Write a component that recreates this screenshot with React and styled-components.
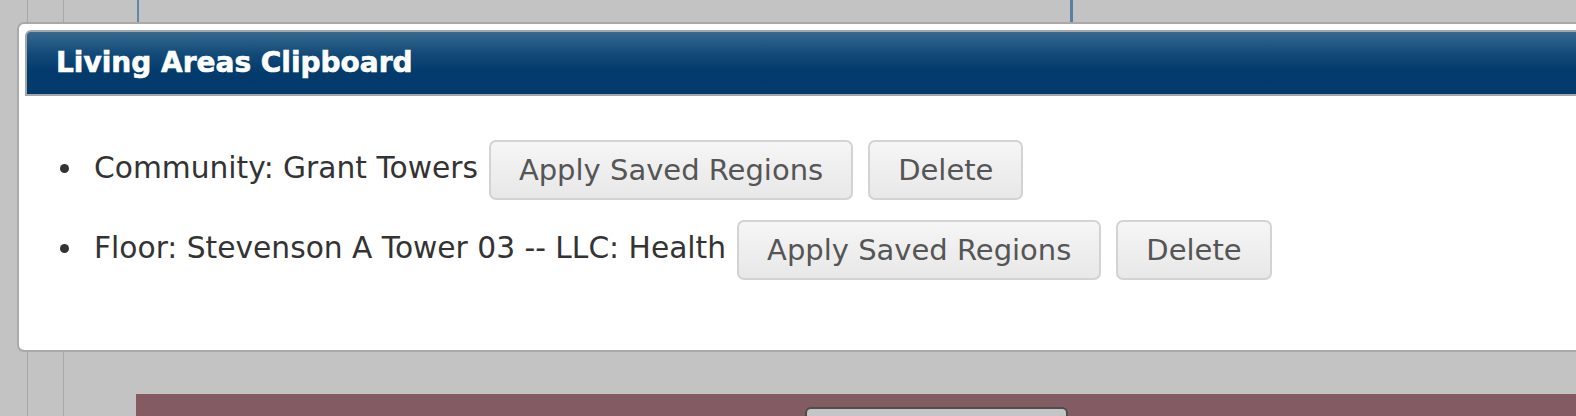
import React from 'react'
import styled, { createGlobalStyle } from 'styled-components'

const GlobalStyle = createGlobalStyle`
  html, body {
    margin: 0;
    padding: 0;
    background: #c3c3c3;
  }
  #root {
    height: 416px;
    overflow: hidden;
    position: relative;
  }
`

const clips = [
  { id: 1, label: 'Community: Grant Towers' },
  { id: 2, label: 'Floor: Stevenson A Tower 03 -- LLC: Health' },
]

function App() {
  return (
    <>
      <GlobalStyle />
      <Backdrop>
        <RailOuter />
        <RailInner />
        <Main>
          <TopPanel />
          <Spacer />
          <Banner>
            <Tab />
          </Banner>
        </Main>
      </Backdrop>

      <Dialog>
        <TitleBar>Living Areas Clipboard</TitleBar>
        <ClipList>
          {clips.map((clip) => (
            <ClipRow key={clip.id}>
              <Label>{clip.label}</Label>
              <Button>Apply Saved Regions</Button>
              <Button>Delete</Button>
            </ClipRow>
          ))}
        </ClipList>
      </Dialog>
    </>
  )
}

export default App

const Backdrop = styled.div`
  display: flex;
  height: 416px;
`

const RailOuter = styled.div`
  width: 27px;
  border-right: 1px solid #a8a8a8;
  flex-shrink: 0;
`

const RailInner = styled.div`
  width: 35px;
  border-right: 1px solid #a8a8a8;
  flex-shrink: 0;
`

const Main = styled.div`
  flex: 1;
  display: flex;
  flex-direction: column;
`

const TopPanel = styled.div`
  flex-shrink: 0;
  margin-left: 73px;
  width: 931px;
  height: 60px;
  border-left: 2px solid #6288a9;
  border-right: 3px solid #5a7f9f;
`

const Spacer = styled.div`
  flex-shrink: 0;
  height: 334px;
`

const Banner = styled.div`
  margin-left: 72px;
  flex: 1;
  background: #825c62;
  padding: 13px 0 0 669px;
`

const Tab = styled.div`
  width: 259px;
  height: 20px;
  background: #c5c5c5;
  border: 2px solid #4d4d4d;
  border-bottom: none;
  border-radius: 6px 6px 0 0;
`

const Dialog = styled.div`
  position: absolute;
  top: 22px;
  left: 17px;
  width: 1590px;
  height: 330px;
  box-sizing: border-box;
  background: #fff;
  border: 2px solid #a9a9a9;
  border-radius: 7px;
  padding: 6px;
`

const TitleBar = styled.div`
  height: 62px;
  line-height: 62px;
  border: 2px solid #a6a6a6;
  border-radius: 6px 6px 0 0;
  background: linear-gradient(#36698f 0%, #124a79 35%, #033b6c 62%, #023a6b 100%);
  color: #fff;
  font-family: 'DejaVu Sans', Verdana, sans-serif;
  font-weight: bold;
  font-size: 28px;
  -webkit-text-stroke: 0.6px #fff;
  padding-left: 29px;
`

const ClipList = styled.ul`
  margin: 44px 0 0 0;
  padding: 0 0 0 69px;
  list-style: none;
  color: #333;
  font-family: 'DejaVu Sans', Verdana, sans-serif;
  font-size: 29.7px;
`

const ClipRow = styled.li`
  position: relative;
  height: 60px;
  margin-bottom: 20px;

  &::before {
    content: '';
    position: absolute;
    left: -34px;
    top: 24px;
    width: 9px;
    height: 9px;
    border-radius: 50%;
    background: #333;
  }

  & > * {
    vertical-align: middle;
  }
`

const Label = styled.span`
  display: inline-block;
  line-height: 52px;
  margin-bottom: 5px;
  margin-right: 11px;
`

const Button = styled.button`
  height: 60px;
  padding: 0 28px;
  margin-right: 15px;
  border: 2px solid #d3d3d3;
  border-radius: 7px;
  background: linear-gradient(#f6f6f6 0%, #efefef 45%, #e8e8e8 100%);
  color: #555;
  font-family: 'DejaVu Sans', Verdana, sans-serif;
  font-size: 29px;
  cursor: pointer;
`
